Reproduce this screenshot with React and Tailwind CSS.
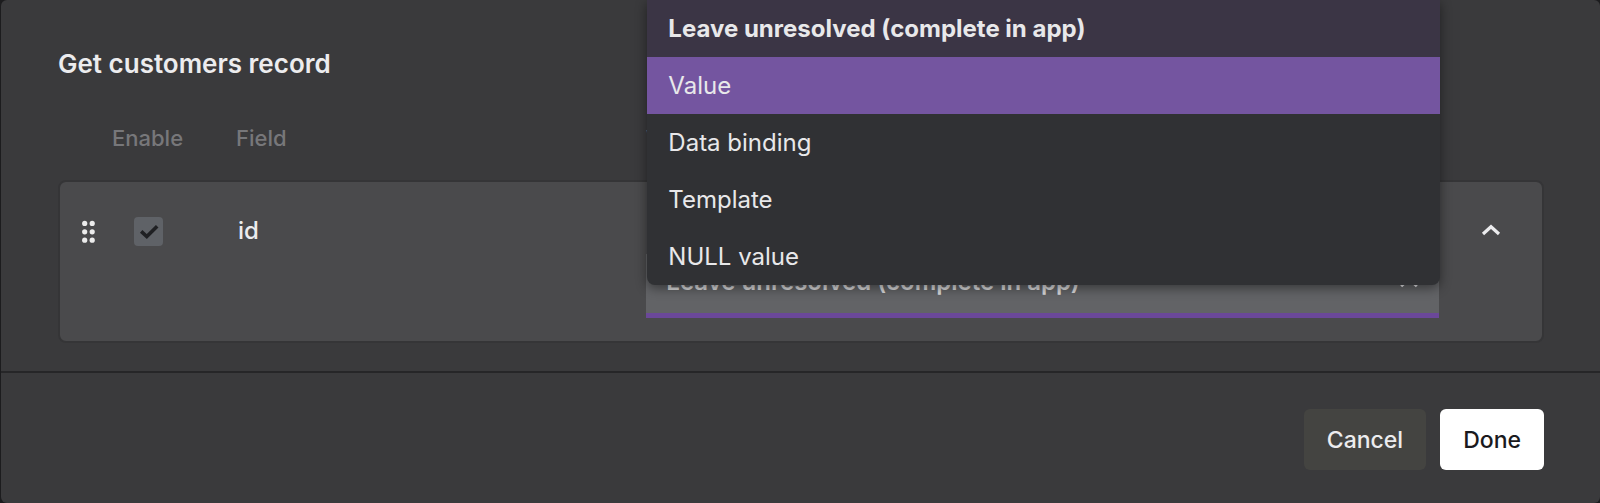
import React, { useState } from "react";
import clsx from "clsx";

const bindingTypes = [
  { value: "unresolved", label: "Leave unresolved (complete in app)" },
  { value: "value", label: "Value" },
  { value: "binding", label: "Data binding" },
  { value: "template", label: "Template" },
  { value: "null", label: "NULL value" },
];

// Shared by the column headings and the field rows
const rowGrid =
  "grid grid-cols-[54px_124px_minmax(0,34fr)_minmax(0,66fr)_103px]";

function DragHandle() {
  return (
    <svg className="w-[14px] h-6 mt-[38px] ml-[22px]" viewBox="0 0 14 24" fill="#ececec">
      {[3.4, 11.8, 20.2].map((y) => (
        <React.Fragment key={y}>
          <circle cx="2.7" cy={y} r="2.6" />
          <circle cx="10.2" cy={y} r="2.6" />
        </React.Fragment>
      ))}
    </svg>
  );
}

function ChevronUp({ className }) {
  return (
    <svg
      className={clsx("w-5 h-3", className)}
      viewBox="0 0 20 12"
      fill="none"
      stroke="currentColor"
      strokeWidth="3.2"
    >
      <path d="M2 10 L10 2.7 L18 10" />
    </svg>
  );
}

function BindingMenu({ selected, highlighted, onSelect, onHighlight }) {
  return (
    <ul
      role="listbox"
      className="absolute z-10 bottom-[33px] left-px -right-px rounded-b-lg overflow-hidden bg-[#303134] shadow-[0_3px_12px_rgba(0,0,0,0.45)]"
    >
      {bindingTypes.map((type) => (
        <li
          key={type.value}
          role="option"
          aria-selected={type.value === selected}
          onClick={() => onSelect(type.value)}
          onMouseEnter={() => onHighlight(type.value)}
          className={clsx(
            "h-[57px] px-[21px] flex items-center text-2xl cursor-pointer text-[#e8e8ea]",
            type.value === selected && "font-bold bg-[#3b3545]",
            type.value === highlighted && "bg-[#7455a0]"
          )}
        >
          {type.label}
        </li>
      ))}
    </ul>
  );
}

export default function App() {
  const [enabled, setEnabled] = useState(true);
  const [binding, setBinding] = useState("unresolved");
  const [highlighted, setHighlighted] = useState("value");

  return (
    <div className="min-h-screen bg-[#1c1c1e] pl-px pb-px overflow-hidden font-['Inter',sans-serif]">
      <section className="rounded-md bg-[#3a3a3c] text-[#ececee]">
        <div className="pl-[57px] pr-14 pt-12 pb-7">
          <h2 className="text-[26px] leading-8 font-semibold">Get customers record</h2>

          <div className={clsx(rowGrid, "mt-11 h-7 text-[22px] leading-7 font-medium text-[#77777a]")}>
            <label htmlFor="field-enable" className="col-start-2">Enable</label>
            <span>Field</span>
            <label htmlFor="field-value">Value</label>
          </div>

          <div className={clsx(rowGrid, "mt-7 h-[163px] rounded-lg border-2 border-[#353537] bg-[#4a4a4c]")}>
            <DragHandle />
            <div className="relative pl-5 pt-[35px]">
              <input
                id="field-enable"
                type="checkbox"
                checked={enabled}
                onChange={(e) => setEnabled(e.target.checked)}
                className="block size-[29px] appearance-none rounded-sm bg-[#5f6267]"
              />
              {enabled && (
                <svg
                  className="absolute left-5 top-[35px] size-[29px] pointer-events-none"
                  viewBox="0 0 29 29"
                  fill="none"
                  stroke="#1f2023"
                  strokeWidth="3.6"
                >
                  <path d="M7.2 14.4 L12.8 19.6 L23.2 9.2" />
                </svg>
              )}
            </div>
            <span className="pt-[33px] text-2xl font-medium">id</span>
            <div className="relative self-end mb-[23px]">
              <select
                id="field-value"
                value={binding}
                onChange={(e) => setBinding(e.target.value)}
                className="block w-full h-16 px-5 pb-1 appearance-none border-b-5 border-[#6b4899] bg-[#626366] text-2xl font-semibold text-[#d8d8da]"
              >
                {bindingTypes.map((type) => (
                  <option key={type.value} value={type.value}>
                    {type.label}
                  </option>
                ))}
              </select>
              <ChevronUp className="absolute right-5 top-[22px] pointer-events-none" />
              <BindingMenu
                selected={binding}
                highlighted={highlighted}
                onSelect={setBinding}
                onHighlight={setHighlighted}
              />
            </div>
            <button type="button" aria-label="Collapse" className="self-start mt-[42px] ml-[42px] w-5">
              <ChevronUp />
            </button>
          </div>
        </div>

        <footer className="flex justify-end gap-[14px] border-t-2 border-[#262628] pl-[57px] pr-14 pt-9 pb-[33px]">
          <button type="button" className="h-[61px] px-[23px] pt-px rounded-md bg-[#444441] text-[23px] font-medium">
            Cancel
          </button>
          <button type="button" className="h-[61px] px-[23px] pt-px rounded-md bg-white text-[23px] font-medium text-[#1a1a1e]">
            Done
          </button>
        </footer>
      </section>
    </div>
  );
}
